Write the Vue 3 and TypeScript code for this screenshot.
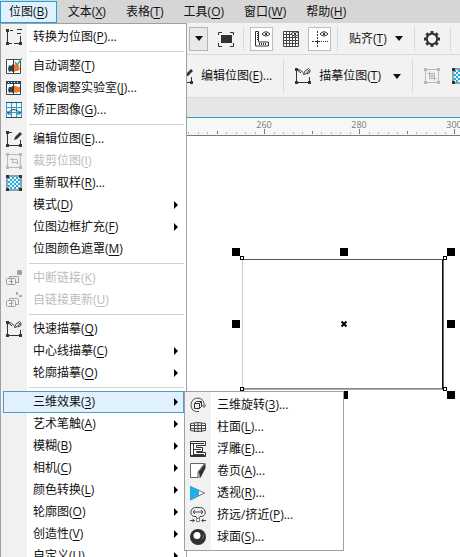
<script setup lang="ts">
import { h, type FunctionalComponent } from 'vue'

/* A layer of an icon: path data, fill colour, stroke colour, stroke width. */
type Layer = [d: string, fill: string, stroke?: string, width?: number]

interface Item {
  label: string
  key: string
  tail?: string
  icon?: string
  disabled?: boolean
  sub?: boolean
  open?: boolean
}

const K = '#333333'
const G = '#b9b9b9'
const corners = 'M0 0h3v3H0zM13 13h3v3h-3zM0 13h3v3H0z'
const allCorners = corners + 'M13 0h3v3h-3z'
const frame = 'M1.5 2v12M14.5 2v12M2 1.5h12M2 14.5h12'

const icons: Record<string, Layer[]> = {
  convert: [
    [corners, K],
    ['M1.5 3v10M3 14.5h3M8 14.5h5M14.5 7v6M4 1.5h3M11 .5h5M11 4.5h4', 'none', K],
  ],
  auto: [
    ['M.5 1.5h14v14H.5z', '#ffffff', '#3f4a52'],
    ['M3 7l2 1 2-2v8l-2-1-2 1-1-3z', '#34424b'],
    ['M8 7l2-1 2 1 1 0v2l1 2-2 2-2 0-2 1z', '#f07a28'],
    ['M7.5 1v14', 'none', K],
    ['M9 4l2 3 5-7', 'none', '#3aa39a', 1.4],
  ],
  lab: [
    ['M.5 1.5h14v13H.5z', '#ffffff', '#24475a'],
    ['M0 1h15v3H0z', '#24475a'],
    ['M3 7l2 0 2-1v7l-2-1-2 1-1-3z', '#34424b'],
    ['M8 6l2 0 2 1 2 0v5l-2 0-2 1-2-1z', '#f07a28'],
    ['M7.5 3v11', 'none', K],
    ['M2 2.5h1M5 2.5h1M8 2.5h1M11 2.5h1', 'none', '#ffffff'],
  ],
  straighten: [
    ['M.5 .5h15v15H.5zM5.5 1v14M10.5 1v14M1 5.5h14M1 10.5h14', '#edf9ff', '#3b97c2'],
    ['M2 11q6-7 12 0M2 9v3h3M14 9v3h-3', 'none', '#24516c', 1],
    ['M0 .5h16M0 15.5h16', 'none', '#2b526a'],
  ],
  edit: [
    [corners, K],
    ['M1.5 3v10M3 14.5h10M14.5 9v5M3 1.5h3', 'none', K],
    ['M8 9l1-3 5-5 2 2-5 5z', K],
  ],
  crop: [
    [allCorners, G],
    [frame, 'none', G],
    ['M4 6.5h7.500v5M6.5 5v4.500h6', 'none', G],
  ],
  cropbar: [
    [allCorners, G],
    [frame, 'none', G],
    ['M5.500 3.500v7h7M3.500 5.500h7v7M8 5v6M5 8h6', 'none', '#b2b2b2'],
  ],
  resample: [
    ['M1 1h14v14H1z', '#e8f8ff', '#22536d'],
    [
      Array.from({ length: 6 }, (_, r) =>
        Array.from({ length: 3 }, (_, c) => `M${2 + c * 4 + (r % 2) * 2} ${2 + r * 2}h2v2h-2z`).join(''),
      ).join(''),
      '#28a8dc',
    ],
    [allCorners, K],
  ],
  unlink: [
    ['M.500 9.500q0-1 1-1h7q1 0 1 1v4q0 1-1 1h-7q-1 0-1-1zM3.500 8.500v-2h8q1 0 1 1v5h-3M3 11.500h4M5.500 9v5', 'none', '#9c9c9c'],
    ['M11 1l1-1h3l1 1v3l-1 1h-3l-1-1z', '#a0a0a0'],
  ],
  refresh: [
    ['M.500 9.500q0-1 1-1h7q1 0 1 1v4q0 1-1 1h-7q-1 0-1-1zM3.500 8.500v-2h8q1 0 1 1v5h-3M3 11.500h4M5.500 9v5', 'none', '#a2a2a2'],
    ['M10 0h2v3h-2zM13 3h3v2h-3z', '#aaaaaa'],
  ],
  trace: [
    [corners, K],
    ['M1.500 3v10M3 14.500h10M14.500 9v5M2 1.500q4 0 6 3M1 1l5 4', 'none', K],
    ['M8.500 6.500l1-3 4-3 1 1-3 4zM15 2q1 3-3 4', 'none', K],
  ],
  rotate: [
    ['M4.500 6.500h5v5h-5zM4.500 6.500l2-2h5l-2 2M11.500 4.500v5l-2 2', 'none', K],
    ['M9 14.500q-8 1-8-7Q2 1 8 1q7 1 6 8M11.500 7.500l2.500 3 2-3', 'none', '#555555'],
  ],
  cylinder: [['M.5 4.500q7.500-2 15 0v7q-7.500 2-15 0zM4.500 4v9M8 3.500v9.500M11.500 4v9M1 6.500h14M1 9.500h14', 'none', '#444444']],
  emboss: [
    ['M.5 .5h15v4h-9v2h6v4h-6v1h9v4H.5z', '#ffffff', K],
    ['M1 2.500h13M3.500 2v11M4 8.500h7M3 13.500h11', 'none', K],
    ['M1 14.500h14', 'none', K],
  ],
  curl: [
    ['M.5 .5h14L8 9v5.500H.5z', '#ffffff', '#666666'],
    ['M15.500 0v5l-5 10-2-6z', '#303030'],
    ['M8.500 9v6h2z', '#8a8a8a'],
  ],
  perspective: [
    ['M.5 1.500l14 6.500-14 7z', '#ffffff', '#777777'],
    ['M0 1l9 4v6l-9 4z', '#20aee8'],
  ],
  pinch: [
    ['M4 9.500Q0 8 1 4q1-4 7-3.500Q14 0 15 4q1 4-3 5.500', 'none', '#444444'],
    ['M3 5h10M5 3l-2 2 2 2M11 3l2 2-2 2M4 9.500h2l2 3 2-3h2M0 13.500h4M2.500 12l2 1.500-2 1.500M16 13.500h-4M13.500 12l-2 1.500 2 1.500', 'none', '#444444'],
    ['M6.500 11.500h3v3h-3z', '#ffffff', '#777777'],
  ],
  sphere: [
    ['M8 0a8 8 0 1 1 0 16A8 8 0 0 1 8 0z', '#303030'],
    ['M7 3a3.500 3.500 0 1 1 0 7a3.500 3.500 0 0 1 0-7z', '#ffffff'],
    ['M9 11q5-1 4-7 3 6-4 7z', '#777777'],
  ],
  fullscreen: [
    ['M3 4h11v8H3z', K],
    ['M.5 4V1.500H4M12 1.500h3.500V4M.5 12v3.500H4M12 15.500h3.500V12', 'none', K],
  ],
  rulers: [
    ['M1.500 .5h3v10.500h10v4H1.500z', '#ffffff', K],
    ['M3 2.500h2M3 4.500h2M3 6.500h2M3 8.500h2M5.500 12v2M7.500 12v2M9.500 12v2M11.500 12v2', 'none', K],
    ['M8 3q4-4.500 8 0q-4 4-8 0z', '#ffffff', K],
    ['M11 2h2v2h-2z', K],
  ],
  grid: [
    ['M.5 .5h15v15H.5zM3.500 0v16M6.500 0v16M9.500 0v16M12.500 0v16M0 3.500h15M0 6.500h15M0 9.500h15M0 12.500h15', '#ffffff', '#444444'],
    ['M8 3q4-4.500 8 0q-4 4-8 0z', '#ffffff', K],
    ['M11 2h2v2h-2z', K],
  ],
  guides: [
    ['M5.500 0v2M5.500 3v2M5.500 6v2M5.500 9v4M5.500 14v2M0 10.500h2M3 10.500h5M9 10.500h1M11 10.500h1M13 10.500h1M15 10.500h1', 'none', K],
    ['M8 3q4-4.500 8 0q-4 4-8 0z', '#ffffff', K],
    ['M11 2h2v2h-2z', K],
  ],
  gear: [
    ['M8 2.800a5.200 5.200 0 1 1 0 10.400a5.200 5.200 0 0 1 0-10.400z', 'none', K, 2],
    ['M6.500 0h3v3h-3zM6.500 13h3v3h-3zM0 6.500h3v3H0zM13 6.500h3v3h-3zM1.300 3.400l2.100-2.100 2.100 2.100-2.100 2.100zM10.500 3.400l2.100-2.100 2.100 2.100-2.100 2.100zM1.300 12.600l2.100-2.100 2.100 2.100-2.100 2.100zM10.500 12.600l2.100-2.100 2.100 2.100-2.100 2.100z', K],
  ],
}

const Icon: FunctionalComponent<{ name: string }> = (props) =>
  h(
    'svg',
    { width: 16, height: 16, viewBox: '0 0 16 16', 'aria-hidden': 'true' },
    icons[props.name].map(([d, fill, stroke, width]) =>
      h('path', { d, fill, stroke: stroke ?? 'none', 'stroke-width': width ?? 1 }),
    ),
  )
Icon.props = ['name']

const bar: Item[] = [
  { label: '位图', key: 'B', open: true },
  { label: '文本', key: 'X' },
  { label: '表格', key: 'T' },
  { label: '工具', key: 'O' },
  { label: '窗口', key: 'W' },
  { label: '帮助', key: 'H' },
]

const groups: Item[][] = [
  [{ label: '转换为位图', key: 'P', tail: '...', icon: 'convert' }],
  [
    { label: '自动调整', key: 'T', icon: 'auto' },
    { label: '图像调整实验室', key: 'J', tail: '...', icon: 'lab' },
    { label: '矫正图像', key: 'G', tail: '...', icon: 'straighten' },
  ],
  [
    { label: '编辑位图', key: 'E', tail: '...', icon: 'edit' },
    { label: '裁剪位图', key: 'I', icon: 'crop', disabled: true },
    { label: '重新取样', key: 'R', tail: '...', icon: 'resample' },
    { label: '模式', key: 'D', sub: true },
    { label: '位图边框扩充', key: 'F', sub: true },
    { label: '位图颜色遮罩', key: 'M' },
  ],
  [
    { label: '中断链接', key: 'K', icon: 'unlink', disabled: true },
    { label: '自链接更新', key: 'U', icon: 'refresh', disabled: true },
  ],
  [
    { label: '快速描摹', key: 'Q', icon: 'trace' },
    { label: '中心线描摹', key: 'C', sub: true },
    { label: '轮廓描摹', key: 'O', sub: true },
  ],
  [
    { label: '三维效果', key: '3', sub: true, open: true },
    { label: '艺术笔触', key: 'A', sub: true },
    { label: '模糊', key: 'B', sub: true },
    { label: '相机', key: 'C', sub: true },
    { label: '颜色转换', key: 'L', sub: true },
    { label: '轮廓图', key: 'O', sub: true },
    { label: '创造性', key: 'V', sub: true },
    { label: '自定义', key: 'U', sub: true },
  ],
]

const effects: Item[] = [
  { label: '三维旋转', key: '3', tail: '...', icon: 'rotate' },
  { label: '柱面', key: 'L', tail: '...', icon: 'cylinder' },
  { label: '浮雕', key: 'E', tail: '...', icon: 'emboss' },
  { label: '卷页', key: 'A', tail: '...', icon: 'curl' },
  { label: '透视', key: 'R', tail: '...', icon: 'perspective' },
  { label: '挤远/挤近', key: 'P', tail: '...', icon: 'pinch' },
  { label: '球面', key: 'S', tail: '...', icon: 'sphere' },
]

/* Ruler: 4.75px per unit, with 260 at x = 264. */
const rulerX = (unit: number): number => Math.round(264 + (unit - 260) * 4.75)
const labels = [260, 280, 300]
const ticks = Array.from({ length: 29 }, (_, i) => 244 + i * 2).map((unit) => ({
  x: rulerX(unit),
  size: unit % 20 === 0 ? 5 : 2,
}))
const halves = [250, 270, 290].map(rulerX)

const handles = [
  [232, 112], [340, 112], [447, 112],
  [232, 184], [447, 184],
  [232, 255], [340, 255], [447, 255],
]
const nodes = [[240, 120], [443, 120], [240, 251], [443, 251]]
</script>

<template>
  <div class="app">
    <nav class="menubar" aria-label="菜单栏">
      <button v-for="m in bar" :key="m.key" type="button" class="top" :class="{ open: m.open }">
        <span>{{ m.label }}(<u>{{ m.key }}</u>)</span>
      </button>
    </nav>

    <div class="toolbar standard">
      <button type="button" class="tool drop" aria-label="缩放级别"><i class="caret"></i></button>
      <button type="button" class="tool" aria-label="全屏预览"><Icon name="fullscreen" /></button>
      <i class="rule"></i>
      <button type="button" class="tool on" aria-label="显示标尺"><Icon name="rulers" /></button>
      <button type="button" class="tool" aria-label="显示网格"><Icon name="grid" /></button>
      <button type="button" class="tool on" aria-label="显示辅助线"><Icon name="guides" /></button>
      <i class="rule"></i>
      <button type="button" class="text"><span>贴齐(<u>T</u>)</span><i class="caret"></i></button>
      <i class="rule"></i>
      <button type="button" class="tool" aria-label="选项"><Icon name="gear" /></button>
      <i class="rule"></i>
    </div>

    <div class="toolbar property">
      <button type="button" class="text"><Icon name="edit" /><span>编辑位图(<u>E</u>)...</span></button>
      <i class="rule"></i>
      <button type="button" class="text"><Icon name="trace" /><span>描摹位图(<u>T</u>)</span><i class="caret"></i></button>
      <i class="rule"></i>
      <button type="button" class="tool" aria-label="裁剪位图" disabled><Icon name="cropbar" /></button>
      <button type="button" class="tool" aria-label="重新取样"><Icon name="resample" /></button>
    </div>

    <div class="tabs"></div>

    <svg class="ruler" height="18" aria-label="标尺">
      <text v-for="n in labels" :key="n" :x="rulerX(n)" y="10" text-anchor="middle">{{ n }}</text>
      <rect v-for="t in ticks" :key="t.x" :x="t.x" :y="16 - t.size" width="1" :height="t.size" :class="{ minor: t.size < 5 }" />
      <rect v-for="x in halves" :key="x" :x="x" y="13" width="1" height="3" />
    </svg>

    <main class="canvas">
      <svg class="drawing" aria-label="选定对象">
        <path d="M242.500 123v130" stroke="#cccccc" />
        <path d="M242 123.500h203" stroke="#555555" />
        <path d="M242 252.500h203" stroke="#888888" />
        <path d="M242 253.500h203" stroke="#aaaaaa" />
        <path d="M442.500 124v129" stroke="#111111" />
        <path d="M443.500 124v129" stroke="#666666" />
        <rect v-for="(p, i) in handles" :key="i" :x="p[0]" :y="p[1]" width="8" height="8" />
        <rect v-for="(p, i) in nodes" :key="'n' + i" :x="p[0] + 0.5" :y="p[1] + 0.5" width="3" height="3" fill="#ffffff" stroke="#000000" />
        <path d="M341.500 185.500l5 5M346.500 185.500l-5 5" stroke="#000000" stroke-width="2" />
      </svg>
    </main>

    <div class="menu main" role="menu" aria-label="位图">
      <div v-for="(g, gi) in groups" :key="gi" class="group" role="group">
        <button
          v-for="m in g"
          :key="m.label"
          type="button"
          role="menuitem"
          class="item"
          :class="{ open: m.open }"
          :disabled="m.disabled"
          :aria-haspopup="m.sub ? 'menu' : undefined"
        >
          <span class="slot"><Icon v-if="m.icon" :name="m.icon" /></span>
          <span class="label">{{ m.label }}(<u>{{ m.key }}</u>){{ m.tail }}</span>
          <i v-if="m.sub" class="arrow"></i>
        </button>
      </div>
    </div>

    <div class="menu sub" role="menu" aria-label="三维效果">
      <button v-for="m in effects" :key="m.label" type="button" role="menuitem" class="item">
        <span class="slot"><Icon v-if="m.icon" :name="m.icon" /></span>
        <span class="label">{{ m.label }}(<u>{{ m.key }}</u>){{ m.tail }}</span>
      </button>
    </div>
  </div>
</template>

<style>
html,
body {
  overflow: hidden;
  background: #ffffff;
}
</style>

<style scoped>
.app {
  position: relative;
  display: flex;
  flex-direction: column;
  min-height: 100vh;
  font: 12px/16px "Open Sans", "Noto Sans CJK SC", sans-serif;
  color: #111111;
}

button {
  display: flex;
  align-items: center;
  margin: 0;
  padding: 0;
  border: 1px solid transparent;
  background: none;
  font: inherit;
  color: inherit;
  white-space: nowrap;
}

u {
  text-underline-offset: 2px;
}

svg {
  display: block;
  flex: none;
}

.menubar {
  display: flex;
  gap: 2px;
  height: 23px;
  padding: 1px 0 0;
  box-sizing: border-box;
  background: #d6d6d6;
}

.top {
  padding: 0 8px;
}

.top.open {
  border-color: #26a0da;
  background: #dff3fe;
}

.toolbar {
  display: flex;
  align-items: center;
  box-sizing: border-box;
  background: #f2f2f2;
  border-bottom: 1px solid #d9d9d9;
  overflow: hidden;
}

.standard {
  height: 32px;
  padding-left: 189px;
  gap: 6px;
}

.property {
  height: 43px;
  padding-left: 176px;
  gap: 10px;
}

.tool {
  flex: none;
  justify-content: center;
  width: 23px;
  height: 24px;
}

.tool.drop {
  width: 19px;
  border-color: #b5b5b5;
  background: #e9e9e9;
}

.property .tool {
  width: 18px;
}

.tool.on {
  border-color: #bdbdbd;
  background: #ffffff;
}

.text {
  flex: none;
  gap: 8px;
}

.standard .text {
  padding: 0 4px;
}

.caret {
  border: 4px solid transparent;
  border-top: 5px solid #111111;
  border-bottom: 0;
}

.property .caret {
  margin-left: 4px;
}

.rule {
  flex: none;
  width: 1px;
  height: 24px;
  background: #d9d9d9;
}

.property .rule {
  height: 32px;
}

.tabs {
  height: 19px;
  background: #e6e6e6;
  border-bottom: 1px solid #2a9fc4;
}

.ruler {
  width: 100%;
  background: #f7f7f7;
  border-bottom: 1px solid #777777;
  box-sizing: border-box;
  font: 9px "Open Sans", sans-serif;
  fill: #777777;
}

.ruler .minor {
  fill: #b5b5b5;
}

.canvas {
  flex: 1;
  display: flex;
  background: #ffffff;
}

.drawing {
  flex: 1;
  min-height: 320px;
  fill: #000000;
}

.menu {
  position: absolute;
  box-sizing: border-box;
  padding: 2px 0;
  border: 1px solid #a0a0a0;
  background: linear-gradient(to right, #f1f1f1 26px, #ffffff 26px);
}

.menu.main {
  top: 23px;
  left: 0;
  width: 187px;
}

.menu.sub {
  top: 391px;
  left: 184px;
  width: 160px;
}

.group + .group {
  padding-top: 7px;
  background: linear-gradient(#d0d0d0, #d0d0d0) 28px 3px / 155px 1px no-repeat;
}

.item {
  width: 100%;
  height: 22px;
  padding-right: 7px;
  border-left: 0;
}

.item:disabled {
  color: #bcbcbc;
}

.item.open {
  background: #e0f1fd;
  border: 1px solid #4a9fc4;
  width: calc(100% - 4px);
  margin-left: 2px;
  padding-right: 5px;
}

.slot {
  flex: none;
  display: flex;
  justify-content: center;
  width: 26px;
  margin-right: 6px;
}

.open .slot {
  width: 23px;
}

.label {
  flex: 1;
  text-align: left;
}

.arrow {
  border: 4px solid transparent;
  border-left: 4px solid #000000;
  border-right: 0;
}
</style>
